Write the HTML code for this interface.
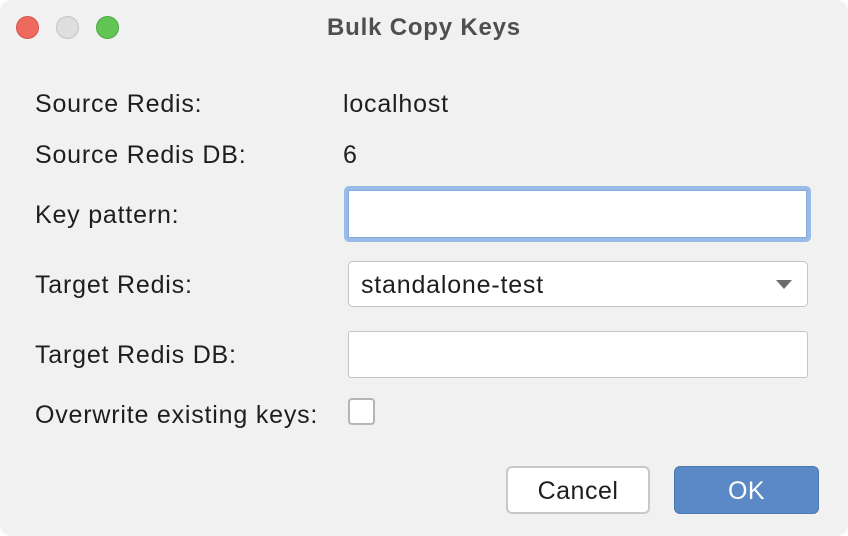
<!DOCTYPE html>
<html><head><style>
body{margin:0;width:848px;height:536px;background:#fff;overflow:hidden;font-family:"Liberation Sans",sans-serif;}
.win{position:absolute;left:0;top:0;width:848px;height:536px;background:#f1f1f1;border-radius:12px;overflow:hidden;}
.dot{position:absolute;top:16px;width:23px;height:23px;border-radius:50%;box-sizing:border-box;}
.t{position:absolute;font-size:25px;letter-spacing:0.8px;color:#1e1e1e;white-space:nowrap;}
.box{position:absolute;background:#fff;box-sizing:border-box;border:1px solid #c4c4c4;border-radius:3px;}
</style></head><body><div class="win">
<div class="dot" style="left:16px;background:#ee695e;border:1px solid #d5544a"></div>
<div class="dot" style="left:56px;background:#dedede;border:1px solid #c3c3c3"></div>
<div class="dot" style="left:96px;background:#61c554;border:1px solid #4ea843"></div>
<div class="t" style="left:0;width:848px;text-align:center;top:14px;font-weight:bold;color:#4f4f4f;font-size:24px;letter-spacing:0.8px">Bulk Copy Keys</div>
<div class="t" style="left:35px;top:90px">Source Redis:</div>
<div class="t" style="left:343px;top:90px">localhost</div>
<div class="t" style="left:35px;top:141px">Source Redis DB:</div>
<div class="t" style="left:343px;top:141px">6</div>
<div class="t" style="left:35px;top:201px">Key pattern:</div>
<div class="box" style="left:344px;top:186px;width:467px;height:56px;border:4px solid #98bbe8;border-radius:5px"><div style="position:absolute;inset:0;border:1px solid #86a9d9"></div></div>
<div class="t" style="left:35px;top:271px">Target Redis:</div>
<div class="box" style="left:348px;top:261px;width:460px;height:46px;border-radius:5px"></div>
<div class="t" style="left:361px;top:271px">standalone-test</div>
<div style="position:absolute;left:776px;top:280px;width:0;height:0;border-left:8px solid transparent;border-right:8px solid transparent;border-top:9px solid #6b6b6b"></div>
<div class="t" style="left:35px;top:341px">Target Redis DB:</div>
<div class="box" style="left:348px;top:331px;width:460px;height:47px"></div>
<div class="t" style="left:35px;top:401px">Overwrite existing keys:</div>
<div class="box" style="left:348px;top:398px;width:27px;height:27px;border:2px solid #b5b5b5;border-radius:4px"></div>
<div class="box" style="left:506px;top:466px;width:144px;height:48px;border:2px solid #c8c8c8;border-radius:6px"></div>
<div class="t" style="left:506px;width:144px;text-align:center;top:477px;font-size:25px;letter-spacing:0.5px">Cancel</div>
<div class="box" style="left:674px;top:466px;width:145px;height:48px;background:#5b89c5;border:1px solid #4c78b2;border-radius:6px"></div>
<div class="t" style="left:674px;width:145px;text-align:center;top:477px;font-size:25px;letter-spacing:0.5px;color:#fff">OK</div>
</div></body></html>
